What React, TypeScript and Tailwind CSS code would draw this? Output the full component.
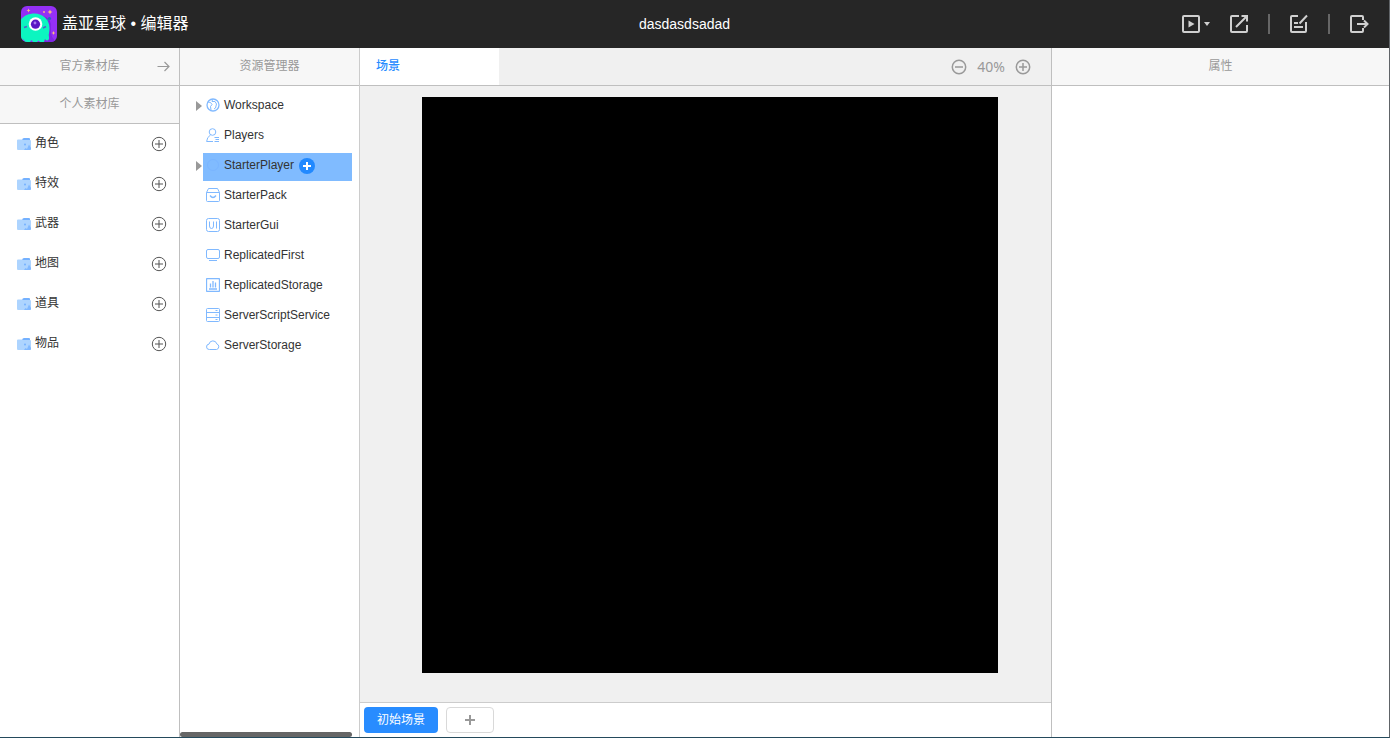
import { useState } from "react";

const folders = ["角色", "特效", "武器", "地图", "道具", "物品"];

const services = [
  { name: "Workspace", expandable: true },
  { name: "Players", expandable: false },
  { name: "StarterPlayer", expandable: true },
  { name: "StarterPack", expandable: false },
  { name: "StarterGui", expandable: false },
  { name: "ReplicatedFirst", expandable: false },
  { name: "ReplicatedStorage", expandable: false },
  { name: "ServerScriptService", expandable: false },
  { name: "ServerStorage", expandable: false },
];

function Logo() {
  return (
    <svg viewBox="0 0 36 36" className="h-9 w-9 shrink-0" aria-hidden="true">
      <defs>
        <clipPath id="logo-clip">
          <rect width="36" height="36" rx="6" />
        </clipPath>
      </defs>
      <g clipPath="url(#logo-clip)">
        <rect width="36" height="36" fill="#9430f5" />
        <path d="M22 10q9 2 8 12t6 14H20z" fill="#7f25e4" />
        <path d="M25 16l3-3" stroke="#149bb8" strokeWidth="1.5" />
        <circle cx="28.5" cy="12.5" r="1.6" fill="#2368bd" />
        <path
          d="M0 13.500C3 9.500 8 7.500 13.500 7.500 22 7.500 28.500 14 28.500 22c0 3-.5 5-.8 7 .2 2 .8 3 0 4.500-1 1.500-3 1-3.700-.5L23 36h-4l-1.500-1.500L16 36h-4l-1.500-2L9 36H4l-1.500-2.500L0 34z"
          fill="#0cf5c0"
        />
        <circle cx="14.5" cy="18" r="6.800" fill="#fff" />
        <circle cx="14.5" cy="18.200" r="4.600" fill="#5b16c4" />
        <circle cx="14" cy="17" r="1.400" fill="#a678ee" />
        <path d="M3 21.500l3-1M22 22l3-1.500" stroke="#4a65c9" strokeWidth="1.800" />
        <g fill="#ffbd80">
          <path d="M7.500 2.500l.6 1.400 1.400.6-1.400.6-.6 1.400-.6-1.400-1.400-.6 1.400-.6z" />
          <path d="M29 3.500l.8 1.700 1.700.8-1.700.8-.8 1.700-.8-1.700-1.700-.8 1.700-.8z" />
          <path d="M32.500 25l.6 1.400 1.400.6-1.400.6-.6 1.400-.6-1.400-1.400-.6 1.400-.6z" />
          <circle cx="23" cy="6" r=".9" />
        </g>
      </g>
    </svg>
  );
}

function ToolIcon({ name }: { name: string }) {
  return (
    <svg viewBox="0 0 20 20" className="h-5 w-5" fill="none" stroke="#d0d0d0" strokeWidth="2" aria-hidden="true">
      {name === "play" && (
        <>
          <rect x="2" y="2" width="16" height="16" rx="1" />
          <path d="M7.500 6.500v7l6-3.500z" fill="#d0d0d0" stroke="none" />
        </>
      )}
      {name === "share" && (
        <>
          <path d="M10 2H3a1 1 0 0 0-1 1v14a1 1 0 0 0 1 1h14a1 1 0 0 0 1-1v-6" />
          <path d="M7 13L18 2M12.500 2H18v5.500" />
        </>
      )}
      {name === "edit" && (
        <>
          <path d="M9 2H3a1 1 0 0 0-1 1v14a1 1 0 0 0 1 1h13a1 1 0 0 0 1-1V8" />
          <path d="M10.500 9.500L18 1.500M5 9h4M5 13h9" />
        </>
      )}
      {name === "exit" && (
        <>
          <path d="M14 6V3a1 1 0 0 0-1-1H3a1 1 0 0 0-1 1v14a1 1 0 0 0 1 1h10a1 1 0 0 0 1-1v-3" />
          <path d="M8 10h10.500M15 6.500l3.500 3.500-3.500 3.500" />
        </>
      )}
    </svg>
  );
}

function ServiceIcon({ name }: { name: string }) {
  return (
    <svg viewBox="0 0 14 14" className="h-3.5 w-3.5 shrink-0" fill="none" stroke="#80b9ff" aria-hidden="true">
      {name === "Workspace" && (
        <>
          <circle cx="7" cy="7" r="6" strokeWidth="1.300" />
          <path d="M2 4l2.500.5 1.500 2-1.500 2 .5 3.500M6.500 1.500l-.5 2h3l1.500 2.500-1 4-1.500 1" />
        </>
      )}
      {name === "Players" && (
        <>
          <circle cx="6.5" cy="4" r="3.300" />
          <path d="M4.500 7Q1 9 .6 13.500H7M8.500 9.500H13M9.500 11.500H13M8.500 13.500H13" />
        </>
      )}
      {name === "StarterPlayer" && <circle cx="7" cy="7" r="5.500" stroke="#7ab5ff" />}
      {name === "StarterPack" && (
        <>
          <path d="M.5 4.500L2.500.5h9l2 4v8q0 1-1 1h-11q-1 0-1-1zM.5 4.500h13" />
          <path d="M4 7.500q3 4 6 0" strokeWidth="1.300" />
        </>
      )}
      {name === "StarterGui" && (
        <>
          <rect x=".5" y=".5" width="13" height="13" rx="2" />
          <path d="M3.500 3.500V8q0 2.500 2 2.500t2-2.500V3.500M10.500 3.500V10.500" />
        </>
      )}
      {name === "ReplicatedFirst" && (
        <>
          <rect x=".5" y="1.500" width="13" height="9" rx="1.500" />
          <path d="M3 12.500h8" />
        </>
      )}
      {name === "ReplicatedStorage" && (
        <>
          <rect x=".5" y=".5" width="13" height="13" rx="1" strokeWidth="1.300" />
          <path d="M4.500 5.500v4M7 3v6.500M9.500 4.500v5M3 11h8" strokeWidth="1.300" />
        </>
      )}
      {name === "ServerScriptService" && (
        <>
          <rect x=".5" y=".5" width="13" height="13" rx="1" />
          <path d="M.5 4.500h13M.5 9.500h13M9.500 2.500h2M9.500 7h2M9.500 11.500h2" />
        </>
      )}
      {name === "ServerStorage" && (
        <path d="M3.500 11.500a2.700 2.700 0 0 1-.5-5.400 4 4 0 0 1 7.800-.2 2.900 2.900 0 0 1-.3 5.600z" />
      )}
    </svg>
  );
}

function FolderIcon() {
  return (
    <svg viewBox="0 0 14 12" className="h-3 w-3.5 shrink-0" aria-hidden="true">
      <path d="M5 2Q5.500 0 7 0h5q1 0 1 1v2H5z" fill="#74b1ff" />
      <path d="M0 2.500Q0 1.500 1 1.500h4l1 .5h7q1 0 1 1v7.500q0 1.500-1 1.500H1q-1 0-1-1.500z" fill="#add4ff" />
      <path d="M7 12l1.500-2 1.500 1 2-4.500L14 10v.5q0 1.500-1 1.500z" fill="#80b8ff" />
      <circle cx="8" cy="6.500" r="1" fill="#74b1ff" />
    </svg>
  );
}

function CircleIcon({ plus = true, className }: { plus?: boolean; className: string }) {
  return (
    <svg viewBox="0 0 16 16" className={className} fill="none" stroke="currentColor" aria-hidden="true">
      <circle cx="8" cy="8" r="6.700" />
      <path d={plus ? "M4 8h8M8 4v8" : "M4 8h8"} />
    </svg>
  );
}

function PanelTitle({ children }: { children: React.ReactNode }) {
  return (
    <h2 className="flex h-[38px] items-center justify-center border-b border-[#bfbfbf] bg-[#f7f7f7] pb-0.5 text-xs text-[#999]">
      {children}
    </h2>
  );
}

export default function App() {
  const [selected, setSelected] = useState("StarterPlayer");
  const [zoom, setZoom] = useState(40);

  return (
    <div className="flex min-h-screen flex-col border-r border-b border-r-[#606468] border-b-[#244a5c] bg-white font-['Liberation_Sans','Noto_Sans_CJK_SC',sans-serif] text-[#333]">
      <header className="grid h-12 grid-cols-[1fr_auto_1fr] items-center bg-[#262626] pr-5 text-white">
        <div className="flex items-center gap-[5px] pl-[21px]">
          <Logo />
          <span className="text-base">盖亚星球 • 编辑器</span>
        </div>
        <h1 className="text-sm">dasdasdsadad</h1>
        <div className="flex items-center justify-end gap-[19px]">
          <button type="button" aria-label="运行" className="flex items-center gap-[3px]">
            <ToolIcon name="play" />
            <svg viewBox="0 0 6 4" className="h-1 w-1.5" aria-hidden="true">
              <path d="M0 0h6L3 4z" fill="#d0d0d0" />
            </svg>
          </button>
          <button type="button" aria-label="分享">
            <ToolIcon name="share" />
          </button>
          <span className="h-5 w-0.5 bg-[#666]" />
          <button type="button" aria-label="编辑">
            <ToolIcon name="edit" />
          </button>
          <span className="h-5 w-0.5 bg-[#666]" />
          <button type="button" aria-label="退出">
            <ToolIcon name="exit" />
          </button>
        </div>
      </header>

      <div className="flex grow">
        {/* Asset libraries */}
        <aside className="w-[180px] shrink-0 border-r border-[#bfbfbf]">
          <div className="grid h-[38px] grid-cols-[1fr_auto_1fr] items-center border-b border-[#bfbfbf] bg-[#f7f7f7] text-[#999]">
            <h2 className="col-start-2 pb-0.5 text-xs">官方素材库</h2>
            <button type="button" aria-label="打开官方素材库" className="justify-self-end pr-2">
              <svg viewBox="0 0 14 12" className="h-3 w-3.5" fill="none" stroke="currentColor" strokeWidth="1.2" aria-hidden="true">
                <path d="M.5 5.500H12M7.500 1L12 5.500 7.500 10" />
              </svg>
            </button>
          </div>
          <PanelTitle>个人素材库</PanelTitle>
          <ul>
            {folders.map((folder) => (
              <li key={folder} className="flex h-10 items-center pr-3 pl-[17px]">
                <FolderIcon />
                <span className="grow pb-0.5 pl-1 text-xs">{folder}</span>
                <button type="button" aria-label={`添加${folder}`} className="text-[#555]">
                  <CircleIcon className="h-4 w-4" />
                </button>
              </li>
            ))}
          </ul>
        </aside>

        {/* Explorer */}
        <aside className="flex w-[180px] shrink-0 flex-col border-r border-[#ccc]">
          <PanelTitle>资源管理器</PanelTitle>
          <ul className="flex grow flex-col gap-0.5 pt-[7px] pr-[7px] pl-4">
            {services.map(({ name, expandable }) => (
              <li key={name} className="flex h-7 items-center">
                <span className="w-[7px] shrink-0 pb-0.5">
                  {expandable && (
                    <svg viewBox="0 0 6 10" className="h-2.5 w-1.5" aria-hidden="true">
                      <path d="M0 0l6 5-6 5z" fill="#999" />
                    </svg>
                  )}
                </span>
                <div className={`flex h-full grow items-center pb-1 pl-[3px] ${selected === name ? "bg-[#80bbff]" : ""}`}>
                  <ServiceIcon name={name} />
                  <button type="button" onClick={() => setSelected(name)} className="pl-1 text-xs">
                    {name}
                  </button>
                  {selected === name && (
                    <button type="button" aria-label={`添加到 ${name}`} className="pt-0.5 pl-[5px]">
                      <svg viewBox="0 0 16 16" className="h-4 w-4" aria-hidden="true">
                        <circle cx="8" cy="8" r="8" fill="#2189ff" />
                        <path d="M4 8h8M8 4v8" stroke="#fff" strokeWidth="2" />
                      </svg>
                    </button>
                  )}
                </div>
              </li>
            ))}
          </ul>
          <div className="mr-[7px] h-[5px] rounded-sm bg-[#666]" />
        </aside>

        {/* Scene */}
        <main className="flex min-w-0 grow flex-col">
          <div className="flex h-[38px] items-stretch border-b border-[#bfbfbf] bg-[#f0f0f0]">
            <button type="button" className="w-[139px] bg-white pb-0.5 pl-4 text-left text-xs font-medium text-[#288cff]">
              场景
            </button>
            <div className="flex grow items-center justify-end gap-2.5 pr-5 text-[#999]">
              <button type="button" aria-label="缩小" onClick={() => setZoom(zoom - 10)}>
                <CircleIcon plus={false} className="h-4 w-4 stroke-[1.5]" />
              </button>
              <span className="font-['Noto_Sans',sans-serif] text-sm">{zoom}%</span>
              <button type="button" aria-label="放大" onClick={() => setZoom(zoom + 10)}>
                <CircleIcon className="h-4 w-4 stroke-[1.5]" />
              </button>
            </div>
          </div>
          <div className="flex grow justify-center bg-[#f0f0f0] pt-[11px] pb-7 pl-[9px]">
            <div className="aspect-square w-full max-w-[576px] self-start bg-black" />
          </div>
          <div className="flex h-[35px] items-center gap-2 border-t border-[#ccc] px-1">
            <button type="button" className="h-[26px] rounded-sm bg-[#288cff] px-[13px] text-xs text-white">
              初始场景
            </button>
            <button type="button" aria-label="新建场景" className="flex h-[26px] w-12 items-center justify-center rounded-sm border border-[#d9d9d9] text-[#999]">
              <svg viewBox="0 0 10 10" className="h-2.5 w-2.5" stroke="currentColor" strokeWidth="2" aria-hidden="true">
                <path d="M0 5h10M5 0v10" />
              </svg>
            </button>
          </div>
        </main>

        {/* Properties */}
        <aside className="w-[338px] shrink-0 border-l border-[#bfbfbf]">
          <PanelTitle>属性</PanelTitle>
        </aside>
      </div>
    </div>
  );
}
